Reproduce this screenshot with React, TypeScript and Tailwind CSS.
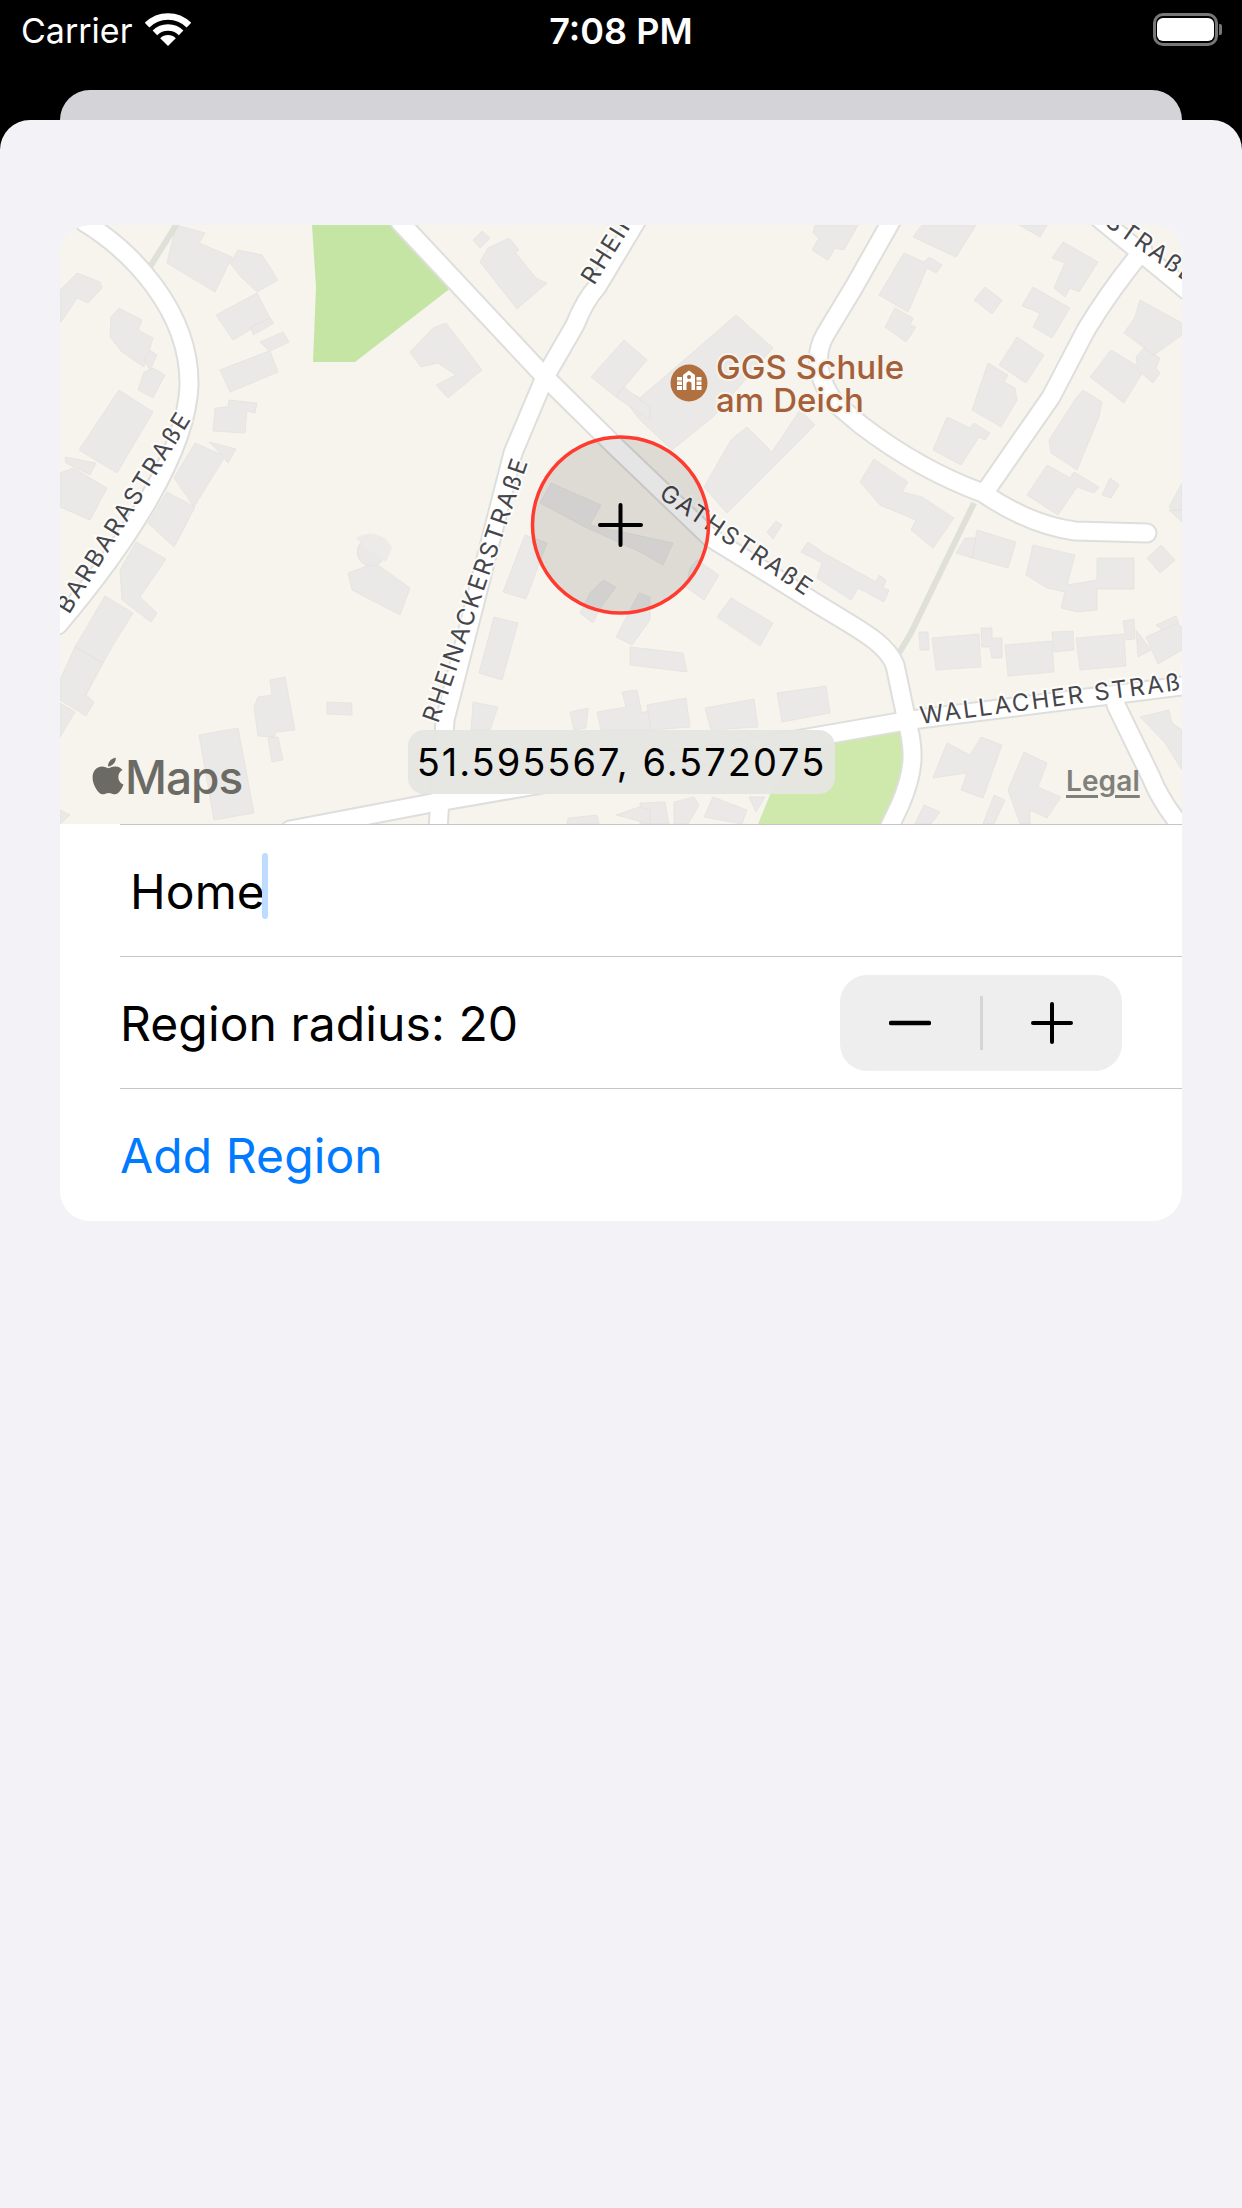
import { FaApple } from "react-icons/fa";

const buildings = [
  "176,225 205,233 199,243 232,257 215,292 167,263",
  "230,263 238,250 262,255 278,280 257,292 241,277",
  "216,315 257,293 270,318 233,340",
  "251,327 270,318 274,323 253,335",
  "220,370 269,351 260,342 283,332 289,342 270,351 278,372 230,392",
  "215,408 228,407 229,400 257,403 255,413 247,411 245,433 213,431",
  "60,290 77,273 100,282 102,288 88,303 77,298 61,322 60,322",
  "111,317 119,308 142,320 138,330 153,338 144,367 122,352 110,337",
  "144,360 150,350 157,355 150,370",
  "144,372 153,368 165,375 153,398 138,390",
  "119,390 153,412 117,473 79,450",
  "60,473 73,468 107,488 90,520 60,507",
  "65,457 96,463 90,475 66,463",
  "195,443 222,455 209,442 236,449 228,463 224,458 194,507 174,478",
  "167,492 195,507 174,547 148,523",
  "136,542 166,559 140,597 157,613 151,622 122,600 120,570",
  "105,596 133,613 113,645 103,663 75,647 88,625",
  "75,647 103,663 86,695 94,702 86,716 65,703 60,700 60,680",
  "60,703 75,712 60,737",
  "60,810 70,815 60,824",
  "348,573 375,563 410,588 400,615 352,590",
  "270,680 285,677 295,730 276,732 274,737 258,736 254,707 258,697 272,695",
  "268,738 278,737 283,760 272,762",
  "327,702 352,703 352,715 327,714",
  "199,735 238,728 254,813 214,820",
  "479,673 494,617 518,623 502,680",
  "503,592 525,535 547,543 526,599",
  "473,702 498,707 490,730 471,730",
  "570,712 588,708 586,728 574,730",
  "597,712 626,707 622,692 637,690 642,713 650,710 650,730 601,730",
  "813,233 815,225 858,225 844,250 835,248 828,260 812,250 819,238",
  "879,295 904,253 924,262 929,257 942,265 936,273 927,268 908,312",
  "885,327 895,308 913,318 910,325 916,327 906,342",
  "913,237 922,225 976,225 956,257",
  "1019,225 1047,225 1040,237",
  "1052,258 1063,242 1098,262 1079,292 1070,288 1065,297 1054,288 1065,263",
  "974,300 985,287 1002,300 992,314",
  "1022,306 1033,287 1070,308 1052,338 1033,327 1040,313",
  "999,365 1017,337 1044,355 1026,383",
  "972,410 988,363 1008,375 1004,382 1015,388 1017,400 1001,427",
  "933,450 947,417 970,428 974,423 990,433 985,440 979,437 961,465",
  "1049,440 1076,398 1083,390 1102,402 1099,417 1077,470 1051,453",
  "1027,495 1047,465 1070,478 1074,472 1099,487 1094,493 1077,487 1058,515",
  "1102,495 1110,478 1119,485 1111,498",
  "1090,377 1111,350 1144,370 1124,403",
  "1136,357 1144,348 1160,358 1156,368 1160,373 1153,383 1138,370",
  "1124,333 1135,317 1140,300 1182,323 1182,335 1154,355",
  "1169,507 1182,483 1182,520",
  "860,482 874,459 908,482 902,492 922,497 954,518 933,548 911,530 916,520 880,505",
  "610,382 640,398 736,315 773,348 713,417 672,450 640,420",
  "704,487 731,440 747,427 772,452 800,410 815,425 727,513",
  "591,377 624,340 647,360 616,397",
  "616,397 624,387 650,407 650,420",
  "480,262 488,248 509,238 519,250 515,252 536,278 547,283 517,309",
  "473,240 482,231 490,238 480,248",
  "410,352 433,328 446,323 482,370 448,398 436,385 456,375 438,363 421,367",
  "540,503 551,483 601,505 590,525 673,543 663,565 640,552 585,527",
  "590,593 603,580 616,587 601,607 593,623 580,613",
  "616,637 639,593 650,597 650,620 632,645",
  "690,568 697,560 719,575 704,600 686,587",
  "717,617 731,598 773,623 760,646",
  "801,552 808,542 824,553 876,582 879,575 886,580 883,588 889,590 884,602 858,588 851,600 817,578 822,563",
  "767,532 776,521 782,525 773,539",
  "630,647 683,653 687,672 630,665",
  "777,693 826,686 830,713 782,722",
  "705,708 754,699 758,727 711,730",
  "647,705 686,698 690,727 651,730",
  "640,803 665,802 669,824 640,824",
  "674,802 694,797 699,805 688,824 674,824",
  "704,817 713,797 747,810 742,824",
  "749,797 765,797 756,812",
  "567,824 568,818 597,815 599,824",
  "616,815 639,807 650,810 650,824",
  "933,778 947,743 970,755 981,737 1002,745 983,798 961,790 967,773",
  "1008,790 1024,752 1047,763 1038,787 1061,797 1047,818 1030,810 1030,824 1020,824",
  "983,824 994,795 1005,800 994,824",
  "915,824 924,805 940,812 931,824",
  "1140,717 1169,710 1172,723 1182,730 1182,770 1165,743 1151,728",
  "972,558 977,530 1016,542 1008,568",
  "956,553 965,538 976,538 972,558",
  "1026,575 1033,545 1075,555 1067,585 1097,580 1097,558 1134,558 1134,589 1097,589 1097,610 1077,612 1061,608 1065,592 1047,588",
  "1147,558 1161,545 1175,560 1160,573",
  "932,638 979,634 981,667 936,670",
  "919,632 928,632 929,650 920,650",
  "981,628 992,628 992,638 1002,638 1002,658 992,658 990,647 982,647",
  "1005,645 1052,641 1054,672 1008,676",
  "1052,632 1073,631 1074,650 1054,652",
  "1076,638 1124,634 1126,666 1080,670",
  "1123,621 1134,619 1135,639 1126,640",
  "1136,630 1151,650 1138,657",
  "1146,637 1176,623 1182,627 1182,650 1158,664",
  "1156,625 1176,616 1179,623 1163,630",
  "1169,510 1182,510 1182,522",
];

const roads = [
  "M84 222 C130 250 190 310 189 385 C187 450 130 540 58 625",
  "M400 222 L545 377 L616 447 L711 538 L811 600 C850 625 885 640 895 665 L906 717 C915 750 915 770 900 805 L888 830",
  "M640 215 L597 287 Q585 300 575 325 L545 377 L513 453 L445 720 L438 830",
  "M290 830 L432 803 L911 720 L1190 685",
  "M893 218 L854 287 L825 335 Q808 365 835 403 L861 425 Q920 470 983 493 Q1030 525 1075 531 L1147 533",
  "M985 492 L1051 397 L1086 330 Q1110 290 1143 250",
  "M1095 215 L1190 293",
  "M1116 705 L1151 777 Q1160 800 1180 825",
];

const labels = [
  { text: "BARBARASTRAßE", x: 69, y: 615, rotate: -58 },
  { text: "RHEINACKERSTRAßE", x: 438, y: 724, rotate: -71 },
  { text: "RHEINACKERSTRAßE", x: 594, y: 286, rotate: -58 },
  { text: "GATHSTRAßE", x: 658, y: 497, rotate: 34 },
  { text: "WALLACHER STRAßE", x: 921, y: 724, rotate: -7.5 },
];

function MapView() {
  return (
    <div className="relative h-[599px] w-full overflow-hidden bg-[#f6f4ec]">
      <svg viewBox="60 225 1122 599" className="block h-[599px] w-[1122px]">
        <polygon points="312,225 316,287 313,362 355,362 452,287 390,225" fill="#c5e5a4" />
        <polygon points="800,745 835,740 903,730 904,767 885,824 758,824 772,790" fill="#cfe8ab" />
        <g fill="#eae9e7" stroke="#e2e1dd" strokeWidth="0.7">
          {buildings.map((p) => (
            <polygon key={p} points={p} />
          ))}
          <circle cx="371" cy="552" r="14" />
          <path d="M356 538 A24 24 0 0 1 392 548 L386 562 L371 552 Z" fill="#ecebe7" stroke="none" />
        </g>
        <path d="M178 222 L148 270" fill="none" stroke="#dfe1d8" strokeWidth="6" />
        <path d="M974 503 L940 573 L911 633 L899 653" fill="none" stroke="#dfe1d8" strokeWidth="6" />
        <g fill="none" strokeLinecap="round" strokeLinejoin="round">
          {roads.map((d) => (
            <path key={d} d={d} stroke="#dededc" strokeWidth="21" />
          ))}
          {roads.map((d) => (
            <path key={d} d={d} stroke="#ffffff" strokeWidth="17" />
          ))}
        </g>
        <g className="font-['Inter',sans-serif] text-[24px]" fill="#46464a" stroke="#ffffff" strokeWidth="4" strokeOpacity="0.75" style={{ paintOrder: "stroke" }} letterSpacing="2.2">
          {labels.map((l) => (
            <text key={l.x} x={l.x} y={l.y} transform={`rotate(${l.rotate} ${l.x} ${l.y})`}>
              {l.text}
            </text>
          ))}
          <text x="1190" y="285" textAnchor="end" transform="rotate(35 1190 285)">STRAßE</text>
        </g>
        <circle cx="620.5" cy="525" r="88" fill="#000000" fillOpacity="0.1" stroke="#ff3b30" strokeWidth="3.5" />
        <path d="M600 525 H641 M620.5 505 V545" stroke="#000000" strokeWidth="4" strokeLinecap="round" />
        <circle cx="689" cy="383" r="18.5" fill="#b0703f" />
        <path d="M689 370.5 L695 375 V390 H683 V375 Z" fill="#ffffff" />
        <path d="M686.5 390 V384 A2.5 2.5 0 0 1 691.5 384 V390 Z" fill="#b0703f" />
        <circle cx="689" cy="377" r="2" fill="#b0703f" />
        <g fill="#ffffff">
          <rect x="677" y="377" width="5" height="3.5" />
          <rect x="677" y="381.5" width="5" height="3.5" />
          <rect x="677" y="386" width="5" height="4" />
          <rect x="696.5" y="377" width="5" height="3.5" />
          <rect x="696.5" y="381.5" width="5" height="3.5" />
          <rect x="696.5" y="386" width="5" height="4" />
        </g>
        <g className="font-['Inter',sans-serif] text-[33px] font-medium" fill="#a5603a" stroke="#f6f4ec" strokeWidth="4" style={{ paintOrder: "stroke" }}>
          <text x="716" y="379">GGS Schule</text>
          <text x="716" y="412">am Deich</text>
        </g>
      </svg>

      <div className="absolute left-[32px] top-[527px] flex items-start text-[#6b6a64]">
        <FaApple className="mt-[3px] h-[42px] w-[32px]" />
        <span className="ml-[1px] text-[46px] leading-[50px] font-medium tracking-[-1px]">Maps</span>
      </div>
      <div className="absolute left-[348px] top-[505px] flex h-[64px] w-[427px] items-center justify-center rounded-[16px] bg-[#e5e6e1]/95 text-[38px] tracking-[2px] text-black">
        51.595567, 6.572075
      </div>
      <span className="absolute left-[1006px] top-[535px] text-[28px] font-semibold text-[#80807a] underline decoration-[3px] underline-offset-[4px]">
        Legal
      </span>
    </div>
  );
}

function Row({ children }: { children: React.ReactNode }) {
  return (
    <div className="ml-[60px] flex h-[132px] items-center border-t border-[#c6c6c8] pt-[3px]">{children}</div>
  );
}

export default function App() {
  return (
    <div className="flex h-[2208px] w-[1242px] flex-col bg-black font-['Inter',sans-serif]">
      <div className="grid h-[90px] grid-cols-3 px-[20px] pt-[11px] text-white">
        <div className="flex items-start gap-[13px]">
          <span className="pl-[1px] text-[34px] leading-[40px]">Carrier</span>
          <svg width="46" height="34" viewBox="0 0 45 34" className="mt-[2px]">
            <g fill="none" stroke="#ffffff" strokeWidth="6.5">
              <path d="M1.6 12.1 A29.5 29.5 0 0 1 43.4 12.1" />
              <path d="M9.4 19.9 A18.5 18.5 0 0 1 35.6 19.9" />
            </g>
            <path d="M22.5 33 L14.7 25.2 A11 11 0 0 1 30.3 25.2 Z" fill="#ffffff" />
          </svg>
        </div>
        <span className="text-center text-[36px] leading-[40px] font-semibold">7:08 PM</span>
        <div className="flex items-center justify-end self-start pt-[2px]">
          <div className="flex h-[33px] w-[65px] items-center justify-center rounded-[10px] border-[3px] border-[#77777a]">
            <div className="h-[23px] w-[57px] rounded-[6px] bg-white" />
          </div>
          <div className="ml-[1px] h-[11px] w-[3px] rounded-r-[2px] bg-[#77777a]" />
        </div>
      </div>

      <div className="mx-[60px] h-[30px] rounded-t-[30px] bg-[#d4d3d8]" />

      <div className="flex-1 rounded-t-[30px] bg-[#f2f2f7] px-[60px] pt-[105px]">
        <div className="overflow-hidden rounded-[30px] bg-white pb-[1px] text-[48px] tracking-[0.1px] text-black">
          <MapView />
          <Row>
            <div className="relative pl-[10px]">
              <span>Home</span>
              <span className="absolute right-[-3px] top-[-3px] h-[66px] w-[6px] rounded-[3px] bg-[#bddcff]" />
            </div>
          </Row>
          <Row>
            <div className="flex w-full items-center justify-between pr-[60px]">
              <span>Region radius: 20</span>
              <div className="mt-[-3px] flex h-[96px] w-[282px] items-center rounded-[27px] bg-[#eeeeef]">
                <div className="flex flex-1 justify-center">
                  <svg width="42" height="6" viewBox="0 0 42 6">
                    <path d="M2 3 H40" stroke="#000000" strokeWidth="4.5" strokeLinecap="round" />
                  </svg>
                </div>
                <div className="h-[54px] w-[3px] bg-[#d5d5d6]" />
                <div className="flex flex-1 justify-center">
                  <svg width="42" height="42" viewBox="0 0 42 42">
                    <path d="M2 21 H40 M21 2 V40" stroke="#000000" strokeWidth="4" strokeLinecap="round" />
                  </svg>
                </div>
              </div>
            </div>
          </Row>
          <Row>
            <span className="text-[#007aff]">Add Region</span>
          </Row>
        </div>
      </div>
    </div>
  );
}
